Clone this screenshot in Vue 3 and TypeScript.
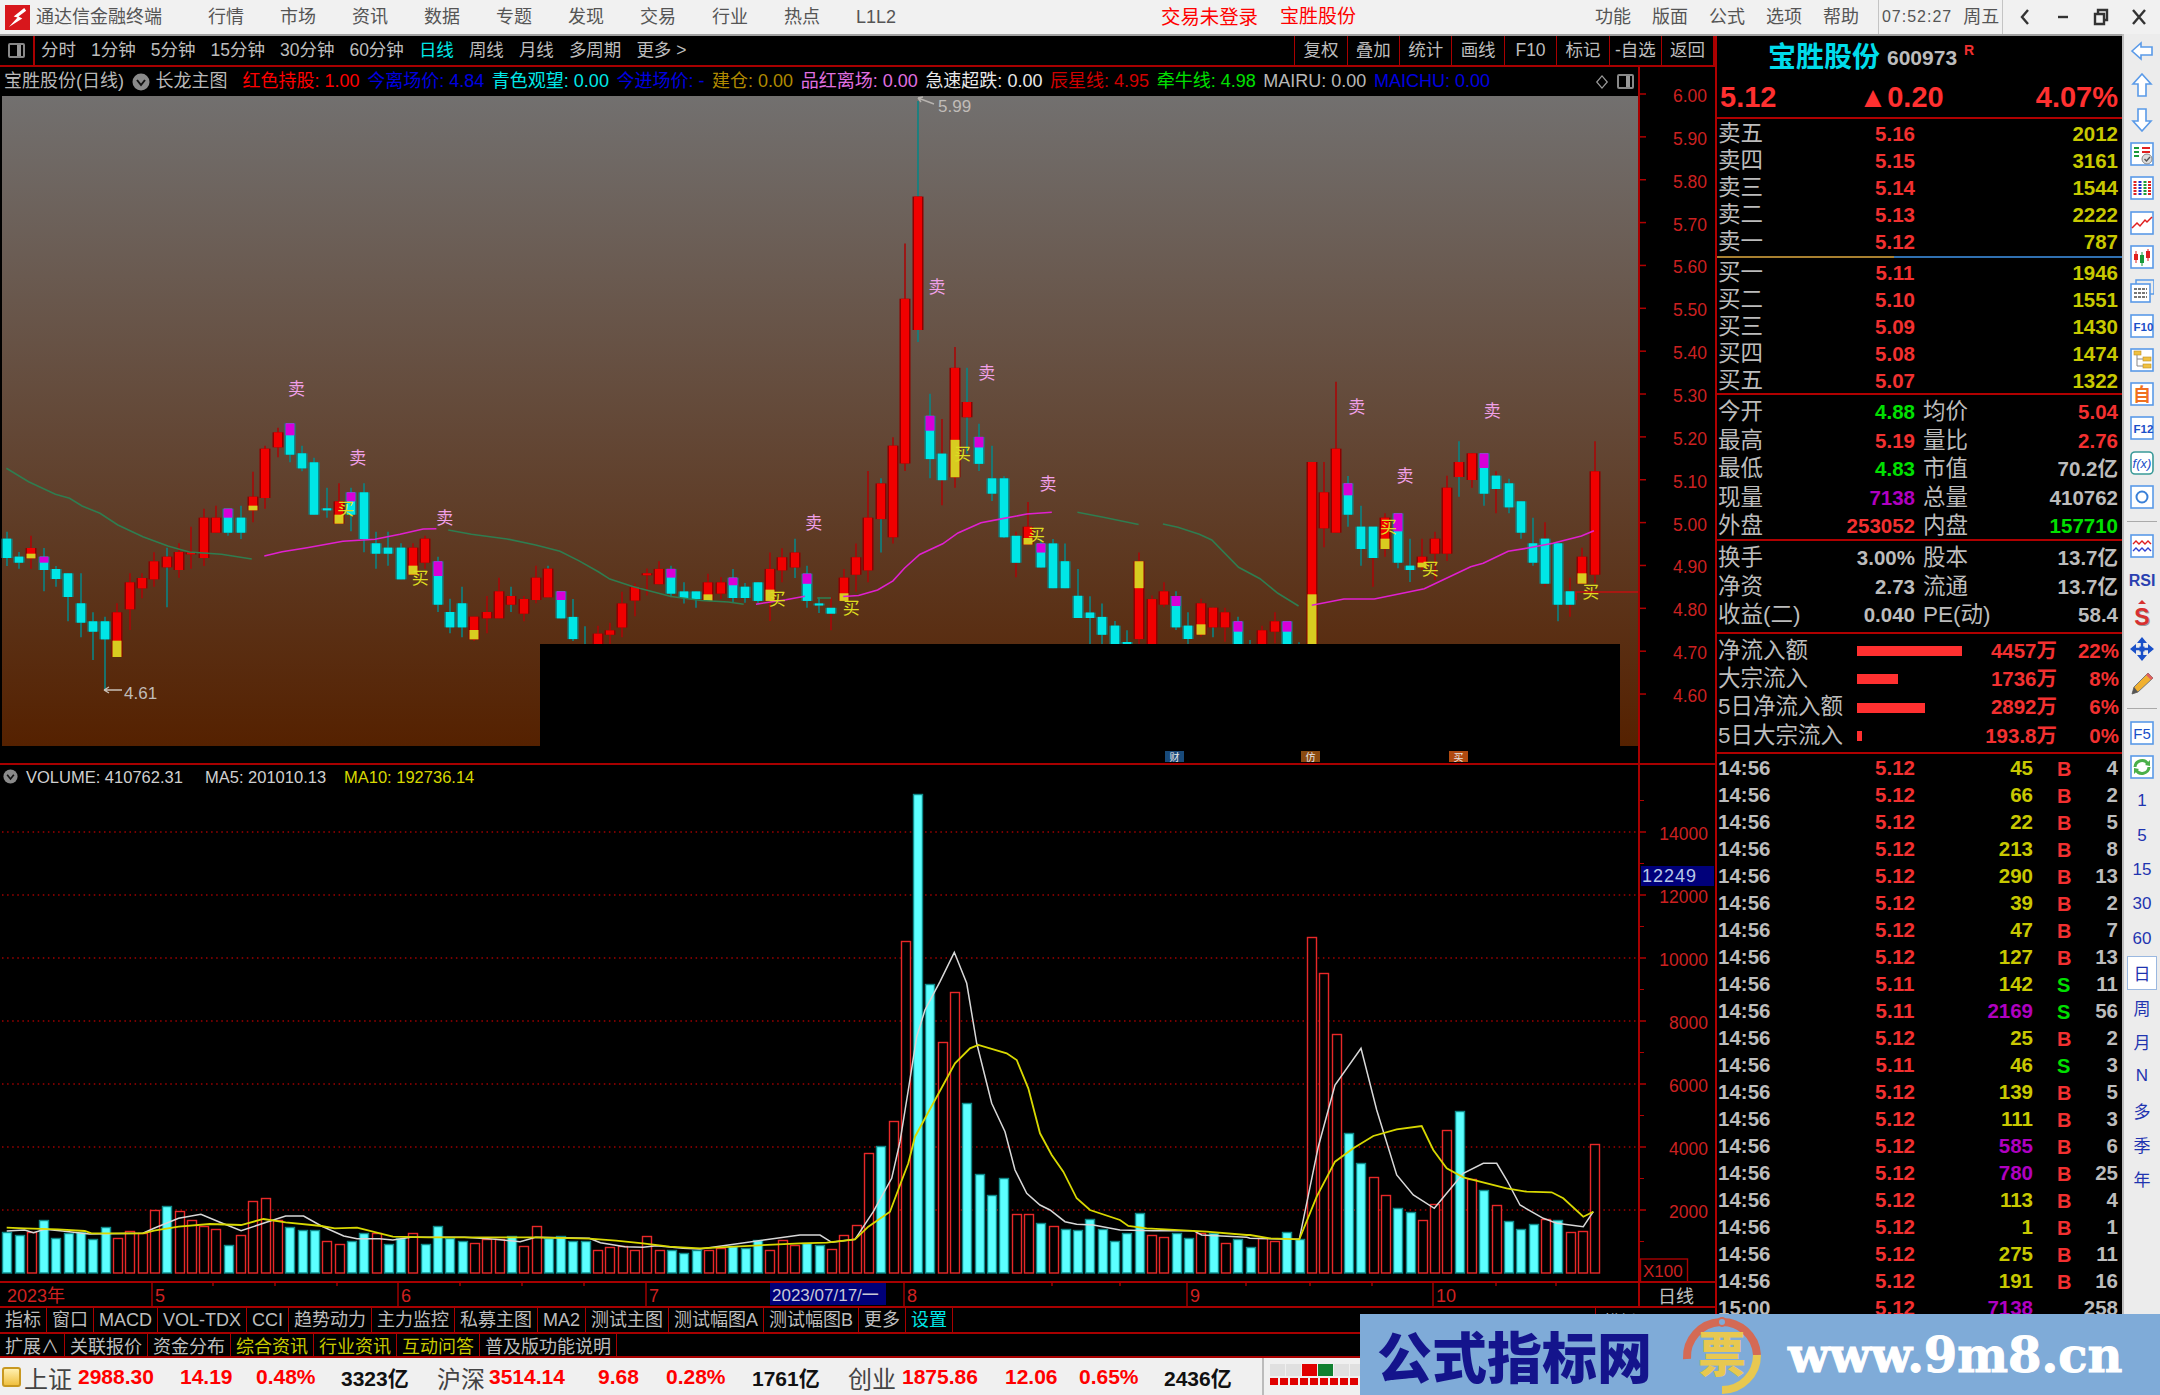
<template>
  <div class="terminal">
    <header class="titlebar">
      <svg class="app-logo" viewBox="0 0 26 26">
        <rect width="26" height="26" fill="#d8171c" />
        <path d="M20 3 L9 12 L13 13 L4 23 L18 14 L14 12 L22 6 Z" fill="#fff" />
      </svg>
      <span class="app-name">通达信金融终端</span>
      <nav class="menu">
        <span v-for="m in menus" :key="m" class="menu-item">{{ m }}</span>
      </nav>
      <span class="login">交易未登录</span>
      <span class="login-name">宝胜股份</span>
      <nav class="menu-right">
        <span v-for="m in rightMenus" :key="m">{{ m }}</span>
      </nav>
      <div class="clock">
        <span class="clock-time">07:52:27</span>
        <span>周五</span>
      </div>
      <div class="win-btns">
        <svg viewBox="0 0 20 20"><path d="M13 3 L7 10 L13 17" /></svg>
        <svg viewBox="0 0 20 20"><path d="M5 10 H15" /></svg>
        <svg viewBox="0 0 20 20"><path d="M4 7 H13 V17 H4 Z M7 7 V3 H16 V13 H13" /></svg>
        <svg viewBox="0 0 20 20"><path d="M4 3 L16 17 M16 3 L4 17" /></svg>
      </div>
    </header>

    <div class="main">
      <section class="left">
        <div class="toolbar">
          <div class="tool-icon"><i></i></div>
          <div class="periods">
            <span v-for="p in periods" :key="p" :class="{ on: p === '日线' }">{{ p }}</span>
            <span>更多 &gt;</span>
          </div>
          <div class="tool-cells">
            <span v-for="t in toolCells" :key="t">{{ t }}</span>
          </div>
        </div>

        <div class="info">
          <span class="gray">宝胜股份(日线)</span>
          <svg class="round-ico" viewBox="0 0 18 18">
            <circle cx="9" cy="9" r="8.5" fill="#8a8a8a" />
            <path d="M5 7 L9 12 L13 7" fill="none" stroke="#111" stroke-width="2" />
          </svg>
          <span class="gray main-name">长龙主图</span>
          <span v-for="i in infoItems" :key="i.t" :class="i.c">{{ i.t }}</span>
          <div class="info-end">
            <svg viewBox="0 0 16 20" width="14" height="20">
              <path d="M8 3 L14 10 L8 17 L2 10 Z" fill="none" stroke="#999" stroke-width="1.4" />
            </svg>
            <div class="tool-icon small"><i></i></div>
          </div>
        </div>

        <svg class="chart" viewBox="0 96 1715 1210" width="1715" height="1210">
          <defs>
            <linearGradient id="bg" x1="0" y1="0" x2="0" y2="1">
              <stop offset="0" stop-color="#72706f" />
              <stop offset="1" stop-color="#552100" />
            </linearGradient>
          </defs>
          <rect x="2" y="96" width="1636" height="650" fill="url(#bg)" />

          <!-- k线 -->
          <g v-for="(c, i) in candles" :key="i">
            <line :x1="c.x" :x2="c.x" :y1="c.wt" :y2="c.wb" :stroke="c.wick" stroke-width="1.6" />
            <rect :x="c.x - 5.5" :y="c.top" width="11" :height="c.h" :fill="c.edge" />
            <rect :x="c.x - 4" :y="c.top" width="8" :height="c.h" :fill="c.fill" />
            <rect v-if="c.part" :x="c.x - 4.5" :y="c.part.y" width="9" :height="c.part.h" :fill="c.part.fill" />
          </g>

          <polyline
            v-for="(l, i) in priceLines"
            :key="'p' + i"
            :points="l.pts"
            :stroke="l.color"
            stroke-width="1.6"
            fill="none"
          />

          <text v-for="(s, i) in sells" :key="'s' + i" :x="s[0]" :y="s[1] + 6" class="sig sell">卖</text>
          <text v-for="(s, i) in buys" :key="'b' + i" :x="s[0]" :y="s[1] + 6" class="sig buy">买</text>

          <path d="M1576 600 V592 H1640" stroke="#c01010" stroke-width="1.6" fill="none" />

          <g class="hilo">
            <path d="M934 104 L918 98 M918 98 L923 97 M918 98 L921 102" stroke="#b8b4b0" fill="none" stroke-width="1.4" />
            <text x="938" y="112">5.99</text>
            <path d="M122 690 H104 M104 690 L109 687 M104 690 L109 693" stroke="#c8c0b8" fill="none" stroke-width="1.4" />
            <text x="124" y="699">4.61</text>
          </g>

          <rect x="540" y="644" width="1080" height="102" fill="#000" />
          <rect x="0" y="746" width="1640" height="18" fill="#000" />
          <g v-for="b in badges" :key="b.t">
            <rect :x="b.x" y="751" width="19" height="11" :fill="b.c" />
            <text :x="b.x + 9.5" y="760.5" class="badge">{{ b.t }}</text>
          </g>

          <!-- 右侧价格轴 -->
          <g v-for="t in priceTicks" :key="t.label">
            <line x1="1640" x2="1646" :y1="t.y" :y2="t.y" stroke="#b00000" stroke-width="1.5" />
            <text x="1707" :y="t.y + 8" class="axis">{{ t.label }}</text>
          </g>

          <line x1="0" x2="1715" y1="764" y2="764" stroke="#a80000" stroke-width="2" />

          <!-- 成交量 -->
          <line
            v-for="t in volTicks"
            :key="'g' + t.v"
            x1="2"
            x2="1638"
            :y1="t.y"
            :y2="t.y"
            stroke="#a00000"
            stroke-width="1.5"
            stroke-dasharray="1.5 3.6"
          />
          <rect
            v-for="(b, i) in volumes"
            :key="'v' + i"
            :x="b.x"
            :y="b.y"
            width="9"
            :height="1273 - b.y"
            :fill="b.up ? '#000' : '#5cffff'"
            :stroke="b.up ? '#e82828' : '#0f8a8a'"
            stroke-width="1.4"
          />
          <polyline :points="volWhite" stroke="#d8d8d8" stroke-width="1.5" fill="none" />
          <polyline :points="volYellow" stroke="#d8d800" stroke-width="1.8" fill="none" />

          <svg x="3" y="769" width="15" height="15" viewBox="0 0 18 18">
            <circle cx="9" cy="9" r="8.5" fill="#8a8a8a" />
            <path d="M5 7 L9 12 L13 7" fill="none" stroke="#111" stroke-width="2" />
          </svg>
          <text x="26" y="783" class="vol-head">VOLUME: 410762.31</text>
          <text x="205" y="783" class="vol-head">MA5: 201010.13</text>
          <text x="344" y="783" class="vol-head ma10">MA10: 192736.14</text>

          <g v-for="t in volTicks" :key="'t' + t.v">
            <line x1="1640" x2="1646" :y1="t.y" :y2="t.y" stroke="#b00000" stroke-width="1.5" />
            <text x="1708" :y="t.y + 8" class="axis">{{ t.v }}</text>
          </g>
          <line
            v-for="y in volMinor"
            :key="'m' + y"
            x1="1640"
            x2="1644"
            :y1="y"
            :y2="y"
            stroke="#b00000"
            stroke-width="1"
          />
          <rect x="1641" y="866" width="73" height="20" fill="#00007a" />
          <text x="1642" y="882" class="cur-vol">12249</text>

          <rect x="1640.5" y="1259" width="47" height="23" fill="#000" stroke="#a80000" stroke-width="1.4" />
          <text x="1643" y="1277" class="axis x100">X100</text>

          <!-- 日期轴 -->
          <line x1="0" x2="1715" y1="1282" y2="1282" stroke="#a80000" stroke-width="2" />
          <line x1="1639" x2="1639" y1="67" y2="1306" stroke="#a80000" stroke-width="2" />
          <line
            v-for="x in dateTicks"
            :key="'d' + x"
            :x1="x"
            :x2="x"
            y1="1282"
            y2="1286"
            stroke="#a80000"
            stroke-width="1.4"
          />
          <g v-for="d in dateLabels" :key="d.t">
            <line :x1="d.x" :x2="d.x" y1="1282" y2="1306" stroke="#a80000" stroke-width="1.4" />
            <text :x="d.x + 3" y="1302" class="date">{{ d.t }}</text>
          </g>
          <text x="7" y="1302" class="date">2023年</text>
          <rect x="770" y="1283" width="116" height="22" fill="#00007a" />
          <text x="772" y="1301" class="date cur-date">2023/07/17/一</text>
          <text x="1658" y="1303" class="day-tag">日线</text>
        </svg>

        <div class="tabs">
          <span
            v-for="t in tabs1"
            :key="t"
            :class="{ cyan: t === '设置' }"
          >{{ t }}</span>
          <div class="tab-right">模板</div>
        </div>
        <div class="tabs">
          <span
            v-for="t in tabs2"
            :key="t.t"
            :class="{ yellow: t.y }"
          >{{ t.t }}</span>
        </div>
      </section>

      <aside class="quote">
        <div class="q-title">
          <span class="q-name">宝胜股份</span>
          <span class="q-code">600973</span>
          <span class="q-r">R</span>
        </div>
        <div class="q-price">
          <span>5.12</span>
          <span class="q-chg">▲0.20</span>
          <span>4.07%</span>
        </div>

        <div class="book sell-book">
          <div v-for="r in sellBook" :key="r[0]" class="book-row">
            <span class="lbl">{{ r[0] }}</span>
            <span class="num red">{{ r[1] }}</span>
            <span class="num yel right">{{ r[2] }}</span>
          </div>
        </div>
        <div class="book-sep"></div>
        <div class="book buy-book">
          <div v-for="r in buyBook" :key="r[0]" class="book-row">
            <span class="lbl">{{ r[0] }}</span>
            <span class="num red">{{ r[1] }}</span>
            <span class="num yel right">{{ r[2] }}</span>
          </div>
        </div>

        <div class="stats stats-a">
          <div v-for="r in statsA" :key="r.a" class="stat-row">
            <div class="pair">
              <span class="lbl">{{ r.a }}</span><span class="num" :class="r.ac">{{ r.av }}</span>
            </div>
            <div class="pair">
              <span class="lbl">{{ r.b }}</span><span class="num" :class="r.bc">{{ r.bv }}</span>
            </div>
          </div>
        </div>
        <div class="stats stats-b">
          <div v-for="r in statsB" :key="r.a" class="stat-row">
            <div class="pair">
              <span class="lbl">{{ r.a }}</span><span class="num gry">{{ r.av }}</span>
            </div>
            <div class="pair">
              <span class="lbl">{{ r.b }}</span><span class="num gry">{{ r.bv }}</span>
            </div>
          </div>
        </div>

        <div class="flows">
          <div v-for="f in flows" :key="f.l" class="flow-row">
            <span class="lbl">{{ f.l }}</span>
            <span class="flow-track"><i :style="{ width: f.w + 'px' }"></i></span>
            <span class="num red right">{{ f.v }}</span>
            <span class="num red right">{{ f.p }}</span>
          </div>
        </div>

        <div class="trades">
          <div v-for="(t, i) in trades" :key="i" class="trade-row">
            <span class="num gry">{{ t.time }}</span>
            <span class="num red center">{{ t.price }}</span>
            <span class="num right" :class="t.big ? 'pur' : 'yel'">{{ t.vol }}</span>
            <span class="num bs" :class="t.bs === 'S' ? 'grn' : 'red'">{{ t.bs }}</span>
            <span class="num gry right">{{ t.n }}</span>
          </div>
        </div>
      </aside>

      <aside class="sidebar">
        <div class="side-item">
          <svg viewBox="0 0 24 24"><path class="arrow" d="M2 12 L11 4 V8 H22 V16 H11 V20 Z" /></svg>
        </div>
        <div class="side-item">
          <svg viewBox="0 0 24 24"><path class="arrow" d="M12 1 L21 11 H16 V23 H8 V11 H3 Z" /></svg>
        </div>
        <div class="side-item">
          <svg viewBox="0 0 24 24"><path class="arrow" d="M12 23 L21 13 H16 V1 H8 V13 H3 Z" /></svg>
        </div>
        <div class="side-item">
          <svg viewBox="0 0 24 24">
            <rect class="box" x="1" y="1" width="22" height="22" />
            <path d="M4 6 H9 M4 10 H9 M4 14 H9" stroke="#1a9a3a" stroke-width="2" />
            <path d="M12 6 H20 M12 10 H20" stroke="#e02020" stroke-width="2" />
            <circle cx="17" cy="17" r="5" fill="#ddd" stroke="#888" />
            <path d="M14.5 17 L16.5 19 L20 15" fill="none" stroke="#555" stroke-width="1.4" />
          </svg>
        </div>
        <div class="side-item">
          <svg viewBox="0 0 24 24">
            <rect class="box" x="1" y="1" width="22" height="22" />
            <path d="M5 5 V19" stroke="#e02020" stroke-width="3" stroke-dasharray="2 1" />
            <path d="M10 5 V19" stroke="#2030d0" stroke-width="3" stroke-dasharray="2 1" />
            <path d="M15 5 V19" stroke="#1a9a3a" stroke-width="3" stroke-dasharray="2 1" />
            <path d="M19.5 5 V19" stroke="#e02020" stroke-width="3" stroke-dasharray="2 1" />
          </svg>
        </div>
        <div class="side-item">
          <svg viewBox="0 0 24 24">
            <rect class="box" x="1" y="1" width="22" height="22" />
            <path d="M2 17 L7 12 L10 15 L15 9 L17 11 L22 6" fill="none" stroke="#e02020" stroke-width="1.5" />
          </svg>
        </div>
        <div class="side-item">
          <svg viewBox="0 0 24 24">
            <rect class="box" x="1" y="1" width="22" height="22" />
            <path d="M6 6 V18 M18 4 V16" stroke="#e02020" />
            <path d="M12 7 V21" stroke="#1a9a3a" />
            <rect x="4" y="9" width="4" height="6" fill="#e02020" />
            <rect x="10" y="10" width="4" height="8" fill="#1a9a3a" />
            <rect x="16" y="6" width="4" height="7" fill="#e02020" />
          </svg>
        </div>
        <div class="side-item">
          <svg viewBox="0 0 24 24">
            <path d="M6 5 V1 H24 V15 H20" fill="none" stroke="#5a9ae8" stroke-width="1.5" />
            <rect class="box" x="1" y="5" width="19" height="18" />
            <path d="M4 10 H17 M4 14 H17 M4 18 H17" stroke="#777" stroke-width="2" stroke-dasharray="3 1" />
          </svg>
        </div>
        <div class="side-item">
          <svg viewBox="0 0 24 24">
            <rect class="box" x="1" y="1" width="22" height="22" />
            <text x="3.5" y="17" class="ico-text start">F10</text>
          </svg>
        </div>
        <div class="side-item">
          <svg viewBox="0 0 24 24">
            <rect class="box" x="1" y="1" width="22" height="22" />
            <rect x="4" y="3" width="7" height="4" fill="#f0c040" stroke="#c09020" stroke-width=".6" />
            <rect x="13" y="9" width="8" height="4" fill="#f0c040" stroke="#c09020" stroke-width=".6" />
            <rect x="13" y="16" width="8" height="4" fill="#f0c040" stroke="#c09020" stroke-width=".6" />
            <path d="M7 7 V18 H13 M7 11 H13" fill="none" stroke="#888" />
          </svg>
        </div>
        <div class="side-item">
          <svg viewBox="0 0 24 24">
            <rect class="box" x="1" y="1" width="22" height="22" />
            <text x="12" y="19" class="ico-text orange">自</text>
          </svg>
        </div>
        <div class="side-item">
          <svg viewBox="0 0 24 24">
            <rect class="box" x="1" y="1" width="22" height="22" />
            <text x="3.5" y="17" class="ico-text start">F12</text>
          </svg>
        </div>
        <div class="side-item">
          <svg viewBox="0 0 24 24">
            <rect class="box teal" x="1" y="1" width="22" height="22" rx="4" />
            <text x="12" y="17" class="ico-text italic">f(x)</text>
          </svg>
        </div>
        <div class="side-item">
          <svg viewBox="0 0 24 24">
            <rect class="box" x="1" y="1" width="22" height="22" />
            <circle cx="12" cy="12" r="5.5" fill="none" stroke="#3a80d8" stroke-width="2" />
          </svg>
        </div>
        <div class="side-sep"></div>
        <div class="side-item">
          <svg viewBox="0 0 24 24">
            <rect class="box" x="1" y="1" width="22" height="22" />
            <path d="M3 10 L6 7 L9 10 L12 7 L15 10 L18 7 L21 10" fill="none" stroke="#e02020" stroke-width="1.4" />
            <path d="M3 17 L6 14 L9 17 L12 14 L15 17 L18 14 L21 17" fill="none" stroke="#3040d0" stroke-width="1.4" />
          </svg>
        </div>
        <div class="side-item"><span class="rsi">RSI</span></div>
        <div class="side-item"><span class="dollar">S</span></div>
        <div class="side-item">
          <svg viewBox="0 0 24 24">
            <path d="M12 0 L17 6 H7 Z M12 24 L17 18 H7 Z M0 12 L6 7 V17 Z M24 12 L18 7 V17 Z" fill="#1a50c8" />
            <path d="M12 5 V19 M5 12 H19" stroke="#1a50c8" stroke-width="2.4" />
            <rect x="9.5" y="9.5" width="5" height="5" fill="#1a50c8" />
          </svg>
        </div>
        <div class="side-item">
          <svg viewBox="0 0 24 24">
            <path d="M18 2 L23 7 L8 21 L2 23 L4 16 Z" fill="#f0b030" stroke="#777" stroke-width="1" />
            <path d="M18 2 L23 7 L21 9 L16 4 Z" fill="#e06060" />
            <path d="M4 16 L2 23 L8 21 Z" fill="#555" />
          </svg>
        </div>
        <div class="side-sep"></div>
        <div class="side-item">
          <svg viewBox="0 0 24 24">
            <rect class="box" x="1" y="1" width="22" height="22" />
            <text x="12" y="18" class="ico-text">F5</text>
          </svg>
        </div>
        <div class="side-item">
          <svg viewBox="0 0 24 24">
            <rect class="box" x="1" y="1" width="22" height="22" />
            <path d="M5 12 A7 7 0 0 1 18 9 M19 12 A7 7 0 0 1 6 15" fill="none" stroke="#4ab04a" stroke-width="3" />
            <path d="M15 10 L20 11 L20 5 Z M9 14 L4 13 L4 19 Z" fill="#4ab04a" />
          </svg>
        </div>
        <div
          v-for="t in sideTexts"
          :key="t"
          class="side-item side-text"
          :class="{ active: t === '日' }"
        >
          <span>{{ t }}</span>
        </div>
      </aside>
    </div>

    <footer class="status">
      <div class="status-grid">
        <div class="gold-ico"></div>
        <template v-for="m in markets" :key="m.name">
          <span class="st-name">{{ m.name }}</span>
          <span class="st-num">{{ m.val }}</span>
          <span class="st-num">{{ m.chg }}</span>
          <span class="st-num">{{ m.pct }}</span>
          <span class="st-amt">{{ m.amt }}</span>
        </template>
      </div>
      <div class="st-lights">
        <div class="lights-top">
          <i></i><i></i><i class="r"></i><i class="g"></i><i></i><i></i>
        </div>
        <div class="lights-bottom"></div>
      </div>
    </footer>

    <div class="watermark">
      <span class="wm-title">公式指标网</span>
      <svg class="wm-logo" viewBox="0 0 80 80">
        <path d="M5 44 A35 35 0 0 1 75 40" fill="none" stroke="#d46a55" stroke-width="8" />
        <path d="M75 40 A35 35 0 0 1 40 75" fill="none" stroke="#e8c850" stroke-width="8" />
        <circle cx="40" cy="7" r="4" fill="#7fabd8" stroke="#d46a55" stroke-width="2" />
        <text x="40" y="57" class="wm-glyph">票</text>
      </svg>
      <span class="wm-url">www.9m8.cn</span>
    </div>
  </div>
</template>

<script setup lang="ts">
type Candle = [string, number, number, number, number, number?]

const menus = ['行情', '市场', '资讯', '数据', '专题', '发现', '交易', '行业', '热点', 'L1L2']
const rightMenus = ['功能', '版面', '公式', '选项', '帮助']
const periods = ['分时', '1分钟', '5分钟', '15分钟', '30分钟', '60分钟', '日线', '周线', '月线', '多周期']
const toolCells = ['复权', '叠加', '统计', '画线', 'F10', '标记', '-自选', '返回']
const sideTexts = ['1', '5', '15', '30', '60', '日', '周', '月', 'N', '多', '季', '年']

const infoItems = [
  { t: '红色持股: 1.00', c: 'red' },
  { t: '今离场价: 4.84', c: 'navy' },
  { t: '青色观望: 0.00', c: 'cyan' },
  { t: '今进场价: -', c: 'navy' },
  { t: '建仓: 0.00', c: 'gold' },
  { t: '品红离场: 0.00', c: 'pink' },
  { t: '急速超跌: 0.00', c: 'white' },
  { t: '辰星线: 4.95', c: 'dred' },
  { t: '牵牛线: 4.98', c: 'green' },
  { t: 'MAIRU: 0.00', c: 'gray' },
  { t: 'MAICHU: 0.00', c: 'navy' }
]

// 坐标是从截图上量的：[类型, 实体顶, 实体底, 影线顶, 影线底, 分色位置]
// r 红 c 青 m 青带品红头 y 红带黄底 Y 黄头红身，rt 红身青影 ck 青身红影
const rawA: Candle[] = [
  ['c', 566, 624, 545, 648], ['c', 620, 638, 606, 656], ['y', 594, 625, 557, 656, 611],
  ['m', 620, 660, 594, 724, 638], ['c', 657, 687, 648, 710], ['c', 670, 741, 670, 814],
  ['c', 760, 818, 670, 862], ['c', 814, 845, 787, 930], ['c', 814, 868, 800, 1020],
  ['y', 787, 921, 760, 921, 872], ['r', 697, 778, 670, 840], ['r', 684, 715, 670, 745],
  ['r', 634, 688, 607, 710], ['rt', 620, 652, 593, 772], ['r', 606, 660, 580, 683],
  ['r', 607, 613, 530, 656], ['r', 503, 624, 476, 648], ['r', 503, 548, 467, 548],
  ['m', 476, 548, 476, 557, 503], ['c', 503, 548, 467, 567], ['y', 440, 481, 365, 517, 467],
  ['r', 296, 444, 287, 476], ['r', 247, 292, 233, 322], ['m', 220, 314, 220, 337, 256],
  ['c', 310, 355, 287, 364], ['c', 337, 494, 323, 494], ['c', 475, 481, 413, 503],
  ['y', 454, 521, 400, 521, 494], ['m', 427, 494, 413, 544, 454], ['c', 427, 567, 400, 607],
  ['c', 580, 611, 545, 656], ['c', 593, 611, 545, 647], ['c', 593, 688, 580, 688],
  ['y', 593, 674, 580, 674, 647], ['r', 566, 638, 557, 656], ['m', 634, 764, 620, 786, 678],
  ['c', 786, 832, 746, 850], ['c', 760, 832, 710, 862], ['y', 800, 868, 800, 873, 840],
  ['r', 786, 805, 738, 850], ['r', 724, 805, 683, 805], ['rt', 738, 764, 710, 786],
  ['r', 747, 791, 738, 814], ['r', 683, 750, 647, 760], ['rt', 656, 742, 647, 742],
  ['m', 724, 805, 724, 805, 750]
]
const rawB: Candle[] = [
  ['c', 1449, 1510, 1400, 1515], ['c', 1530, 1600, 1475, 1568], ['r', 1495, 1560, 1473, 1570],
  ['r', 1486, 1498, 1465, 1560], ['r', 1412, 1478, 1380, 1505], ['r', 1367, 1404, 1357, 1447],
  ['r', 1329, 1333, 1316, 1390], ['r', 1317, 1359, 1296, 1359], ['m', 1317, 1385, 1308, 1395, 1341],
  ['c', 1379, 1397, 1354, 1412], ['c', 1379, 1400, 1379, 1424], ['y', 1354, 1405, 1330, 1405, 1387],
  ['r', 1354, 1385, 1340, 1400], ['m', 1341, 1397, 1317, 1410, 1362], ['c', 1366, 1397, 1356, 1410],
  ['c', 1354, 1405, 1354, 1414], ['y', 1317, 1405, 1272, 1460, 1374], ['r', 1285, 1321, 1260, 1354],
  ['rt', 1272, 1313, 1234, 1342], ['m', 1330, 1405, 1308, 1424, 1358], ['c', 1412, 1416, 1395, 1438],
  ['ck', 1424, 1440, 1395, 1486], ['y', 1341, 1405, 1317, 1405, 1384], ['r', 1285, 1333, 1247, 1380],
  ['r', 1176, 1321, 1048, 1354], ['rt', 1082, 1180, 1068, 1272], ['r', 978, 1230, 955, 1247],
  ['r', 574, 1027, 422, 1048], ['rt', 293, 660, 30, 693], ['m', 896, 1015, 835, 1068, 937],
  ['ck', 1000, 1073, 905, 1142], ['y', 764, 1065, 707, 1094, 962], ['rt', 858, 900, 764, 1000],
  ['m', 954, 1028, 918, 1048, 983], ['c', 1068, 1110, 978, 1130], ['c', 1068, 1230, 1062, 1232],
  ['ck', 1226, 1300, 1215, 1340], ['y', 1201, 1250, 1133, 1250, 1232], ['m', 1247, 1313, 1235, 1313, 1272],
  ['c', 1247, 1370, 1235, 1370], ['c', 1296, 1370, 1247, 1370], ['c', 1391, 1452, 1317, 1452],
  ['c', 1437, 1452, 1392, 1560], ['c', 1449, 1498, 1412, 1560], ['c', 1473, 1560, 1460, 1570],
  ['c', 1518, 1540, 1486, 1568], ['Y', 1296, 1510, 1272, 1560, 1370], ['r', 1400, 1560, 1390, 1600]
]
const rawC: Candle[] = [
  ['r', 724, 764, 697, 772], ['m', 738, 832, 724, 840, 768], ['c', 827, 867, 787, 882],
  ['y', 760, 854, 746, 860, 823], ['rt', 773, 832, 773, 862], ['r', 787, 832, 773, 875],
  ['m', 814, 920, 800, 940, 845], ['c', 890, 950, 870, 1000], ['r', 841, 920, 827, 950],
  ['r', 814, 845, 787, 880], ['m', 814, 920, 814, 940, 845], ['c', 890, 950, 877, 1000],
  ['y', 336, 960, 336, 960, 733], ['r', 427, 535, 336, 592], ['r', 296, 548, 95, 548],
  ['m', 400, 494, 378, 530, 436], ['c', 530, 597, 467, 647], ['ck', 530, 624, 530, 710],
  ['y', 503, 597, 490, 620, 566], ['m', 490, 638, 490, 655, 544], ['c', 647, 660, 566, 696],
  ['y', 620, 652, 566, 660, 638], ['r', 566, 611, 545, 690], ['r', 413, 611, 377, 633],
  ['rt', 336, 381, 274, 440], ['r', 310, 390, 310, 413], ['m', 310, 431, 310, 467, 354],
  ['ck', 377, 417, 364, 490], ['c', 400, 472, 386, 490], ['c', 454, 548, 454, 566],
  ['c', 580, 638, 503, 647], ['ck', 566, 701, 517, 710], ['c', 580, 764, 580, 814],
  ['ck', 724, 764, 683, 800], ['y', 620, 701, 593, 701, 670], ['r', 364, 674, 274, 700]
]

const COL_0 = 6.7
const COL_W = 12.31
const colX = (i: number) => COL_0 + COL_W * i

const yA = (p: number) => 350 + p / 3
const yB = (p: number) => 90 + p / 2.75

const rawAll = [
  ...rawA.map((c) => [c, yA] as const),
  ...rawB.map((c) => [c, yB] as const),
  ...rawC.map((c) => [c, yA] as const)
]

const candles = rawAll.map(([c, fy], i) => {
  const kind = c[0]
  const base = kind[0]
  const isRed = base === 'r' || base === 'y' || base === 'Y'
  let wick = isRed ? '#a80808' : '#0b8484'
  if (kind === 'rt') wick = '#0b8484'
  if (kind === 'ck') wick = '#a80808'
  const top = fy(c[1])
  const bot = fy(c[2])
  let part: { y: number; h: number; fill: string } | null = null
  if (c[5] !== undefined) {
    const s = fy(c[5])
    if (base === 'm') part = { y: top, h: s - top, fill: '#d800d8' }
    if (base === 'y') part = { y: s, h: bot - s, fill: '#d8cc20' }
    if (base === 'Y') part = { y: top, h: s - top, fill: '#d8cc20' }
  }
  return {
    x: Math.round(colX(i)),
    top,
    h: Math.max(bot - top, 2),
    wt: fy(c[3]),
    wb: fy(c[4]),
    wick,
    edge: isRed ? '#8e0000' : '#0a8c8c',
    fill: isRed ? '#f00000' : '#00e6e6',
    part
  }
})

const pts = (list: number[][], ox: number, oy: number, sx: number, sy: number) =>
  list.map((p) => `${(ox + p[0] / sx).toFixed(1)},${(oy + p[1] / sy).toFixed(1)}`).join(' ')

const GREEN = '#2f7d50'
const MAGENTA = '#e020d0'
const priceLines = [
  { color: GREEN, pts: pts([[18, 355], [80, 395], [155, 433], [195, 445], [230, 468], [280, 490], [330, 525], [400, 560], [470, 588], [530, 606], [620, 613], [705, 627]], 0, 350, 2.8, 3) },
  { color: MAGENTA, pts: pts([[740, 618], [790, 605], [860, 593], [960, 574], [1050, 568], [1120, 553], [1185, 537], [1222, 536]], 0, 350, 2.8, 3) },
  { color: GREEN, pts: pts([[1255, 540], [1320, 553], [1420, 567], [1500, 585], [1568, 604]], 0, 350, 2.8, 3) + ' ' + pts([[50, 1295], [100, 1325], [130, 1345], [190, 1365], [290, 1393], [370, 1404], [440, 1408], [480, 1414]], 560, 90, 2.613, 2.75) },
  { color: MAGENTA, pts: pts([[512, 1414], [590, 1402], [640, 1392]], 560, 90, 2.613, 2.75) },
  { color: GREEN, pts: pts([[672, 1397], [708, 1397]], 560, 90, 2.613, 2.75) },
  { color: MAGENTA, pts: pts([[740, 1393], [780, 1390], [830, 1375], [870, 1350], [900, 1315], [940, 1277], [1000, 1248], [1040, 1218], [1100, 1190], [1160, 1178], [1220, 1166], [1285, 1161]], 560, 90, 2.613, 2.75) },
  { color: GREEN, pts: pts([[1352, 1161], [1420, 1175], [1512, 1195]], 560, 90, 2.613, 2.75) },
  { color: GREEN, pts: pts([[8, 522], [50, 532], [110, 553], [145, 570], [220, 652], [280, 686], [330, 730], [388, 768]], 1160, 350, 2.8, 3) },
  { color: MAGENTA, pts: pts([[425, 766], [515, 747], [600, 747], [740, 716], [870, 650], [905, 640], [975, 604], [1030, 594], [1100, 580], [1180, 558], [1215, 542]], 1160, 350, 2.8, 3) }
]

const a = (x: number, y: number) => [x / 2.8, 350 + y / 3]
const b = (x: number, y: number) => [560 + x / 2.613, 90 + y / 2.75]
const c9 = (x: number, y: number) => [1160 + x / 2.8, 350 + y / 3]

const sells = [a(830, 117), a(1002, 323), a(1245, 503), b(663, 1190), b(985, 541), b(1115, 777), b(1275, 1083), c9(551, 170), c9(686, 377), c9(930, 183)]
const buys = [a(968, 478), a(1177, 685), b(568, 1400), b(761, 1425), b(1052, 1000), b(1245, 1225), c9(640, 530), c9(757, 658), c9(1206, 725)]

const badges = [
  { t: '财', x: 1165, c: '#184a7a' },
  { t: '仿', x: 1301, c: '#8a4a10' },
  { t: '买', x: 1449, c: '#b04a10' }
]

const priceTicks = Array.from({ length: 15 }, (_, i) => {
  const p = 6 - i * 0.1
  return { label: p.toFixed(2), y: 94 + (6 - p) * 428.6 }
})

const volY = (v: number) => 1273 - v * 0.0315
const volTicks = [2000, 4000, 6000, 8000, 10000, 12000, 14000].map((v) => ({ v, y: volY(v) }))
const volMinor = [1000, 3000, 5000, 7000, 9000, 11000, 13000, 15000].map(volY)

// 正数青柱 负数红柱，数值是 zoom 里的纵坐标
const volA = [
  396, 404, -396, 360, 414, 400, 396, 418, 382, -414, -392, -400, -329, 319, -333, -360, -378, -387, 436, -405,
  -302, -293, -360, 382, 391, 391, -424, -432, 423, 400, -400, 432, 414, -400, 432, 377, 414, 423, -428, -418,
  -418, 409, -437, -378, 414, 409, 423, 423, -450, -441, -437, -450, -409, -450, 450, 459, 450, -450, -444, 438,
  444, 420, -450, -420, -435
]
const volB = [
  1390, 1396, -1406, -1366, -1334, -1118, 1099, -1024, -484, 41, 613, -786, -636, 969, 1181, 1244, 1194, -1303,
  -1303, 1329, -1339, 1347, 1351, 1316, 1347, 1383, 1360, 1298, -1366, -1370, 1360, 1374, -1360, 1360, -1388,
  1378, 1401, -1374, -1383, 1356, 1378
]
const volC = [
  -110, -218, -403, 699, 789, -830, -884, 924, 937, -961, -911, -690, 632, -838, 870, -916, 964, 987, 973, -957,
  960, -997, -992, -732
]

const volumes = [
  ...volA.map((v) => ({ up: v < 0, y: 1100 + Math.abs(v) / 3 })),
  ...volB.map((v) => ({ up: v < 0, y: 780 + Math.abs(v) / 3 })),
  ...volC.map((v) => ({ up: v < 0, y: 900 + Math.abs(v) / 3 }))
].map((v, i) => ({ up: v.up, y: Math.round(v.y) + 0.5, x: Math.round(colX(i) - 4.5) + 0.5 }))

const volWhite = [
  pts([[15, 393], [55, 390], [75, 398], [100, 388], [140, 393], [200, 402], [320, 400], [345, 385], [400, 355], [450, 343], [490, 365], [540, 392], [600, 365], [640, 348], [680, 348], [720, 378], [770, 408], [800, 416], [850, 416], [880, 420], [920, 412], [1040, 412], [1110, 418], [1165, 425], [1200, 412], [1320, 415], [1345, 428], [1400, 440], [1440, 442], [1470, 437], [1530, 445], [1568, 447]], 0, 1100, 2.24, 3),
  pts([[0, 1365], [60, 1365], [95, 1387], [165, 1378], [220, 1295], [275, 1195], [300, 1085], [325, 930], [350, 770], [375, 690], [420, 605], [463, 517], [500, 610], [530, 790], [575, 970], [615, 1055], [645, 1170], [680, 1240], [720, 1275], [750, 1290], [795, 1325], [830, 1333], [880, 1335], [960, 1350], [1060, 1352], [1180, 1352], [1205, 1365], [1340, 1372]], 800, 780, 3, 3),
  pts([[0, 1015], [148, 1018], [205, 740], [255, 555], [333, 445], [380, 630], [440, 825], [490, 885], [553, 925], [590, 880], [640, 820], [700, 790], [740, 790], [770, 840], [810, 915], [880, 955], [920, 970], [1000, 980], [1030, 935]], 1250, 900, 3, 3)
].join(' ')

const volYellow = [
  pts([[15, 383], [55, 385], [130, 388], [190, 393], [205, 400], [320, 400], [345, 392], [400, 380], [470, 372], [540, 375], [590, 357], [640, 367], [720, 378], [750, 385], [800, 383], [860, 403], [880, 410], [960, 412], [1200, 412], [1320, 416], [1380, 422], [1440, 430], [1500, 440], [1568, 445]], 0, 1100, 2.24, 3),
  pts([[0, 1390], [80, 1388], [165, 1378], [205, 1340], [270, 1295], [300, 1215], [325, 1150], [345, 1070], [405, 960], [465, 850], [510, 805], [535, 795], [620, 820], [650, 840], [685, 925], [720, 1060], [755, 1125], [790, 1175], [830, 1255], [870, 1290], [960, 1320], [985, 1338], [1040, 1345], [1220, 1355], [1340, 1365]], 800, 780, 3, 3),
  pts([[0, 1005], [60, 1015], [148, 1018], [200, 890], [255, 785], [310, 745], [370, 708], [440, 688], [515, 678], [550, 750], [590, 805], [640, 832], [770, 865], [830, 875], [905, 877], [940, 895], [1000, 950], [1030, 935]], 1250, 900, 3, 3)
].join(' ')

const dateTicks = [213, 275, 337, 460, 522, 584, 832, 1052, 1120, 1246, 1310, 1372, 1496, 1556]
const dateLabels = [
  { t: '5', x: 152 },
  { t: '6', x: 398 },
  { t: '7', x: 646 },
  { t: '8', x: 904 },
  { t: '9', x: 1187 },
  { t: '10', x: 1433 }
]

const tabs1 = ['指标', '窗口', 'MACD', 'VOL-TDX', 'CCI', '趋势动力', '主力监控', '私募主图', 'MA2', '测试主图', '测试幅图A', '测试幅图B', '更多', '设置']
const tabs2 = [
  { t: '扩展∧' },
  { t: '关联报价' },
  { t: '资金分布' },
  { t: '综合资讯', y: true },
  { t: '行业资讯', y: true },
  { t: '互动问答', y: true },
  { t: '普及版功能说明' }
]

const sellBook = [
  ['卖五', '5.16', '2012'],
  ['卖四', '5.15', '3161'],
  ['卖三', '5.14', '1544'],
  ['卖二', '5.13', '2222'],
  ['卖一', '5.12', '787']
]
const buyBook = [
  ['买一', '5.11', '1946'],
  ['买二', '5.10', '1551'],
  ['买三', '5.09', '1430'],
  ['买四', '5.08', '1474'],
  ['买五', '5.07', '1322']
]

const statsA = [
  { a: '今开', av: '4.88', ac: 'grn', b: '均价', bv: '5.04', bc: 'red' },
  { a: '最高', av: '5.19', ac: 'red', b: '量比', bv: '2.76', bc: 'red' },
  { a: '最低', av: '4.83', ac: 'grn', b: '市值', bv: '70.2亿', bc: 'gry' },
  { a: '现量', av: '7138', ac: 'pur', b: '总量', bv: '410762', bc: 'gry' },
  { a: '外盘', av: '253052', ac: 'red', b: '内盘', bv: '157710', bc: 'grn' }
]
const statsB = [
  { a: '换手', av: '3.00%', b: '股本', bv: '13.7亿' },
  { a: '净资', av: '2.73', b: '流通', bv: '13.7亿' },
  { a: '收益(二)', av: '0.040', b: 'PE(动)', bv: '58.4' }
]
const flows = [
  { l: '净流入额', w: 105, v: '4457万', p: '22%' },
  { l: '大宗流入', w: 41, v: '1736万', p: '8%' },
  { l: '5日净流入额', w: 68, v: '2892万', p: '6%' },
  { l: '5日大宗流入', w: 5, v: '193.8万', p: '0%' }
]

const tradeRows: [string, string, string, string][] = [
  ['5.12', '45', 'B', '4'], ['5.12', '66', 'B', '2'], ['5.12', '22', 'B', '5'], ['5.12', '213', 'B', '8'],
  ['5.12', '290', 'B', '13'], ['5.12', '39', 'B', '2'], ['5.12', '47', 'B', '7'], ['5.12', '127', 'B', '13'],
  ['5.11', '142', 'S', '11'], ['5.11', '2169', 'S', '56'], ['5.12', '25', 'B', '2'], ['5.11', '46', 'S', '3'],
  ['5.12', '139', 'B', '5'], ['5.12', '111', 'B', '3'], ['5.12', '585', 'B', '6'], ['5.12', '780', 'B', '25'],
  ['5.12', '113', 'B', '4'], ['5.12', '1', 'B', '1'], ['5.12', '275', 'B', '11'], ['5.12', '191', 'B', '16'],
  ['5.12', '7138', '', '258']
]
const trades = tradeRows.map((r, i) => ({
  time: i === tradeRows.length - 1 ? '15:00' : '14:56',
  price: r[0],
  vol: r[1],
  bs: r[2],
  n: r[3],
  big: Number(r[1]) >= 500
}))

const markets = [
  { name: '上证', val: '2988.30', chg: '14.19', pct: '0.48%', amt: '3323亿' },
  { name: '沪深', val: '3514.14', chg: '9.68', pct: '0.28%', amt: '1761亿' },
  { name: '创业', val: '1875.86', chg: '12.06', pct: '0.65%', amt: '2436亿' }
]
</script>

<style scoped>
.terminal {
  position: relative;
  width: 2160px;
  height: 1395px;
  overflow: hidden;
  background: #000;
  font-family: "Liberation Sans", "Noto Sans CJK SC", sans-serif;
  color: #bdbdbd;
}

.titlebar {
  height: 34px;
  line-height: 36px;
  border-bottom: 2px solid #a0a0a0;
  background: #f1f1f1;
  display: flex;
  align-items: center;
  color: #555;
  font-size: 18px;
  position: relative;
}

.app-logo {
  width: 25px;
  height: 25px;
  margin-left: 5px;
}

.app-name {
  margin-left: 6px;
  width: 172px;
}

.menu {
  display: flex;
}

.menu-item {
  width: 72px;
}

.login {
  margin-left: 233px;
  color: #f00;
  font-size: 19.4px;
}

.login-name {
  margin-left: 22px;
  color: #f00;
  font-size: 19px;
}

.menu-right {
  margin-left: 239px;
  display: flex;
  gap: 21px;
}

.clock {
  margin-left: 19px;
  height: 34px;
  width: 125px;
  border-left: 1px solid #c4c4c4;
  border-right: 1px solid #c4c4c4;
  display: flex;
  align-items: center;
  gap: 11px;
  padding-left: 3px;
  box-sizing: border-box;
}

.clock-time {
  font-size: 16px;
  letter-spacing: 1px;
}

.win-btns {
  display: flex;
  margin-left: 12px;
  gap: 18px;
}

.win-btns svg {
  width: 20px;
  height: 20px;
  fill: none;
  stroke: #333;
  stroke-width: 2.4;
}

.main {
  height: 1322px;
  display: flex;
}

.left {
  width: 1715px;
  flex: none;
  display: flex;
  flex-direction: column;
}

.toolbar {
  height: 31px;
  line-height: 31px;
  box-sizing: border-box;
  border-bottom: 2px solid #a80000;
  display: flex;
  align-items: center;
  font-size: 17.5px;
}

.tool-icon {
  width: 35px;
  height: 29px;
  box-sizing: border-box;
  border-right: 2px solid #a80000;
  display: flex;
  align-items: center;
  justify-content: center;
}

.tool-icon i {
  width: 17px;
  height: 15px;
  box-sizing: border-box;
  border: 2px solid #888;
  border-radius: 2px;
  background: linear-gradient(to right, #000 55%, #999 55%, #999 85%, #000 85%);
}

.tool-icon.small {
  width: auto;
  height: auto;
  border: none;
}

.periods {
  display: flex;
  gap: 15px;
  margin-left: 6px;
}

.periods .on {
  color: #00e8e8;
}

.tool-cells {
  margin-left: auto;
  display: flex;
  height: 29px;
}

.tool-cells span {
  width: 52.4px;
  box-sizing: border-box;
  border-left: 1px solid #a80000;
  display: flex;
  align-items: center;
  justify-content: center;
}

.tool-cells span:last-child {
  border-right: 2px solid #a80000;
  width: 54px;
}

.info {
  width: 1640px;
  height: 29px;
  line-height: 29px;
  box-sizing: border-box;
  padding-left: 4px;
  display: flex;
  align-items: center;
  gap: 7.6px;
  font-size: 18px;
  white-space: nowrap;
}

.round-ico {
  width: 18px;
  height: 18px;
}

.main-name {
  margin-right: 7.4px;
  margin-left: -1.6px;
}

.gray { color: #b8b8b8; }
.red { color: #f02828; }
.info .red { color: #f00; }
.navy { color: #0000e0; }
.cyan { color: #00e8e8; }
.gold { color: #b08a00; }
.pink { color: #e070e0; }
.white { color: #e8e8e8; }
.dred { color: #d00000; }
.green { color: #00e000; }
.yellow { color: #c8c800; }

.info-end {
  margin-left: auto;
  padding-right: 6px;
  display: flex;
  align-items: center;
  gap: 8px;
}

.chart {
  display: block;
  flex: none;
  overflow: visible;
}

.chart text {
  font-family: "Liberation Sans", "Noto Sans CJK SC", sans-serif;
}

.sig {
  font-size: 17px;
  text-anchor: middle;
}

.sell { fill: #f0a0e8; }
.buy { fill: #dcdc20; }

.hilo text {
  font-size: 17px;
  fill: #c0bcb8;
}

.badge {
  font-size: 10px;
  fill: #e8e8e8;
  text-anchor: middle;
}

.axis {
  font-size: 17.5px;
  fill: #cc2020;
  text-anchor: end;
}

.x100 {
  text-anchor: start;
  font-size: 17px;
}

.vol-head {
  font-size: 16.5px;
  fill: #d0d0d0;
}

.ma10 {
  fill: #d8d800;
}

.cur-vol {
  font-size: 18px;
  letter-spacing: 1px;
  fill: #b8c8e8;
}

.date {
  font-size: 18px;
  fill: #d02020;
}

.cur-date {
  fill: #c8c8d8;
  font-size: 17px;
}

.day-tag {
  font-size: 18px;
  fill: #c0c0c0;
}

.tabs {
  height: 26px;
  box-sizing: border-box;
  border-top: 2px solid #a80000;
  display: flex;
  font-size: 18px;
  white-space: nowrap;
}

.tabs + .tabs {
  border-bottom: 2px solid #a80000;
  height: 26px;
}

.tabs span {
  padding: 0 5px;
  border-right: 1px solid #a80000;
  line-height: 25px;
  color: #bdbdbd;
}

.tabs + .tabs span {
  line-height: 26px;
}

.tabs span.cyan { color: #00e8e8; }
.tabs span.yellow { color: #c8c800; }

.tab-right {
  margin-left: auto;
  width: 120px;
  box-sizing: border-box;
  border-left: 1px solid #a80000;
  padding-left: 8px;
  font-size: 16px;
}

.quote {
  width: 407px;
  flex: none;
  box-sizing: border-box;
  border-left: 2px solid #b00000;
  font-weight: normal;
  overflow: hidden;
}

.q-title {
  height: 38px;
  padding-left: 51px;
  display: flex;
  align-items: center;
  gap: 7px;
}

.q-name {
  font-size: 28px;
  font-weight: bold;
  color: #00dcea;
}

.q-code {
  font-size: 21px;
  font-weight: bold;
  color: #bcbcbc;
  margin-top: 6px;
}

.q-r {
  font-size: 14px;
  font-weight: bold;
  color: #f03030;
  margin-top: -10px;
}

.q-price {
  height: 45px;
  box-sizing: border-box;
  padding: 3px 4px 0 3px;
  border-bottom: 2px solid #b00000;
  display: flex;
  align-items: center;
  justify-content: space-between;
  font-size: 29px;
  font-weight: bold;
  color: #ff3030;
}

.q-chg {
  margin-right: 10px;
}

.lbl {
  font-size: 22.5px;
  color: #bcbcbc;
  line-height: 1;
  white-space: nowrap;
}

.num {
  font-size: 20.5px;
  font-weight: bold;
  line-height: 1;
  white-space: nowrap;
}

.num.red { color: #f23030; }
.num.yel { color: #c8c800; }
.num.grn { color: #00e000; }
.num.pur { color: #b000c0; }
.num.gry { color: #bcbcbc; }

.right { text-align: right; }
.center { text-align: center; }

.book-row {
  height: 27px;
  display: grid;
  grid-template-columns: 140px 74px 1fr;
  align-items: center;
  padding: 0 4px 0 1px;
}

.book-row .red { text-align: center; }

.book-sep {
  height: 2px;
  background: linear-gradient(to right, #a88030 177px, #3070b0 177px);
}

.sell-book {
  height: 136.5px;
  padding-top: 2px;
  box-sizing: border-box;
}

.buy-book {
  padding-top: 2.5px;
  height: 137.5px;
  box-sizing: border-box;
  border-bottom: 2px solid #b00000;
}

.stats {
  box-sizing: border-box;
  border-bottom: 2px solid #b00000;
  padding-left: 1px;
  padding-right: 4px;
}

.stats-a {
  height: 146px;
  padding-top: 3px;
}

.stats-b {
  height: 93px;
  padding-top: 3px;
}

.stat-row {
  height: 28.5px;
  display: grid;
  grid-template-columns: 197px 1fr;
  column-gap: 8px;
  align-items: center;
}

.pair {
  display: flex;
  justify-content: space-between;
  align-items: center;
}

.flows {
  height: 120px;
  box-sizing: border-box;
  border-bottom: 2px solid #b00000;
  padding: 3px 3px 0 1px;
}

.flow-row {
  height: 28.3px;
  display: grid;
  grid-template-columns: 139px 105px 95px 1fr;
  align-items: center;
}

.flow-track {
  display: flex;
}

.flow-track i {
  height: 10px;
  background: #ff3030;
}

.trades {
  padding: 1px 4px 0 1px;
}

.trade-row {
  height: 27px;
  display: grid;
  grid-template-columns: 140px 74px 101px 38px 1fr;
  align-items: center;
}

.bs {
  padding-left: 24px;
  font-size: 20px;
}

.sidebar {
  width: 38px;
  flex: none;
  background: #ececec;
  box-sizing: border-box;
  border-left: 2px solid #bdbdbd;
  margin-top: -2px;
  position: relative;
  z-index: 1;
  overflow: hidden;
}

.side-item {
  height: 34.3px;
  display: flex;
  align-items: center;
  justify-content: center;
}

.side-item svg {
  width: 24px;
  height: 24px;
}

.side-sep {
  height: 15px;
  box-sizing: border-box;
  margin: 0 3px;
  background: linear-gradient(#ececec 7px, #aaa 7px, #aaa 8px, #ececec 8px);
}

.arrow {
  fill: #fff;
  stroke: #5a9ae8;
  stroke-width: 1.6;
}

.box {
  fill: #fff;
  stroke: #5a9ae8;
  stroke-width: 1.6;
}

.box.teal {
  stroke: #3a9a98;
}

.ico-text {
  font-size: 15px;
  fill: #1a50c8;
  text-anchor: middle;
  font-family: "Liberation Sans", "Noto Sans CJK SC", sans-serif;
}

.ico-text.start {
  text-anchor: start;
  font-size: 11.5px;
  font-weight: bold;
}

.ico-text.orange {
  fill: #f07020;
  font-size: 18px;
  font-weight: bold;
}

.ico-text.italic {
  font-style: italic;
  font-size: 13px;
}

.rsi {
  font-size: 16px;
  font-weight: bold;
  color: #2a40b0;
}

.dollar {
  position: relative;
  font-size: 23px;
  line-height: 1;
  margin-top: 5px;
  font-weight: bold;
  color: #d83030;
  text-shadow: 1px 1px 0 #999;
}

.dollar::before {
  content: "";
  position: absolute;
  left: 4px;
  top: -6px;
  border: 4px solid transparent;
  border-bottom-color: #d83030;
  border-top: none;
}

.side-text {
  color: #1f34b0;
  font-size: 17px;
}

.side-text.active {
  margin: 0 3px;
  box-sizing: border-box;
  background: #fff;
  border: 1px solid #9ab8e0;
}

.status {
  height: 37px;
  background: #f0f0f0;
  display: flex;
  align-items: center;
}

.status-grid {
  display: grid;
  grid-template-columns:
    24px
    54px 102px 76px 85px 96px
    52px 109px 68px 86px 96px
    54px 103px 74px 85px 98px;
  align-items: center;
  width: 1262px;
  white-space: nowrap;
  margin-top: 1px;
}

.gold-ico {
  width: 19px;
  height: 20px;
  margin-left: 2px;
  box-sizing: border-box;
  border: 2px solid #c89820;
  border-radius: 3px;
  background: linear-gradient(#fff0b0, #f0c040);
}

.st-name {
  font-size: 24px;
  color: #444;
}

.st-num {
  font-size: 21px;
  font-weight: bold;
  color: #f00;
}

.st-amt {
  font-size: 21px;
  font-weight: bold;
  color: #111;
}

.st-lights {
  height: 37px;
  box-sizing: border-box;
  border-left: 2px solid #bbb;
  padding: 6px 0 0 6px;
}

.lights-top {
  display: flex;
}

.lights-top i {
  width: 15px;
  height: 12px;
  background: #e0e0e0;
  margin-right: 1px;
}

.lights-top i.r { background: #e00000; }
.lights-top i.g { background: #108030; }

.lights-bottom {
  margin-top: 2px;
  width: 90px;
  height: 7px;
  background: repeating-linear-gradient(to right, #e00000 0 8px, transparent 8px 10px);
}

.watermark {
  position: absolute;
  left: 1360px;
  top: 1314px;
  right: 0;
  bottom: 0;
  background: #7fabd8;
  display: flex;
  align-items: center;
  padding-left: 17px;
  z-index: 2;
}

.wm-title {
  font-family: "Noto Sans CJK SC", sans-serif;
  font-weight: 900;
  font-size: 55px;
  line-height: 1;
  color: #14148c;
  white-space: nowrap;
}

.wm-logo {
  width: 80px;
  height: 80px;
  margin-left: 30px;
  flex: none;
}

.wm-glyph {
  font-family: "Noto Sans CJK SC", sans-serif;
  font-size: 48px;
  font-weight: 900;
  fill: #e8c850;
  text-anchor: middle;
}

.wm-url {
  margin-left: 26px;
  font-family: "DejaVu Serif", serif;
  font-weight: bold;
  font-size: 48px;
  color: #fff;
  -webkit-text-stroke: 1px #fff;
  white-space: nowrap;
}
</style>

<style>
html,
body {
  margin: 0;
  background: #000;
}
</style>
